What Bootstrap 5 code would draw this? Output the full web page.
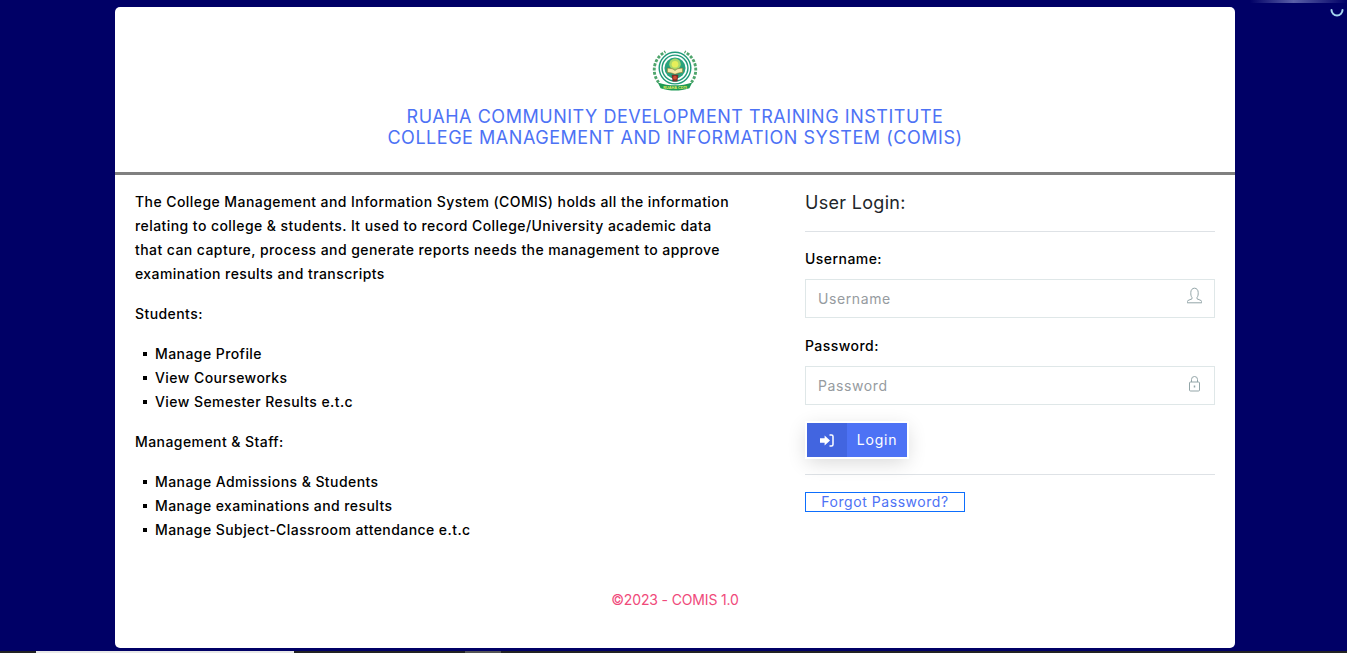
<!DOCTYPE html>
<html lang="en">
<head>
<meta charset="utf-8">
<title>COMIS Login</title>
<link href="https://cdn.jsdelivr.net/npm/bootstrap@5.3.0/dist/css/bootstrap.min.css" rel="stylesheet">
<style>
html,body{height:653px;overflow:hidden}
body{background:#000066;font-family:"Inter","Noto Sans",sans-serif;font-size:14px;color:#000;line-height:24px;position:relative}
.sheet{width:1120px;height:641px;margin:7px 0 0 115px;background:#fff;border-radius:5px;overflow:hidden}
.head-block{height:165px;border-bottom:3px solid #808080;box-sizing:content-box;text-align:center;display:flex;flex-direction:column;align-items:center}
.crest{margin-top:40px;width:46px;height:46px;display:block}
.inst{margin:13px 0 0;font-size:18px;line-height:21px;color:#4d72f5;font-weight:400;letter-spacing:.53px}
.body-row{display:flex}
.intro{width:671px;padding:15px 51px 0 20px;font-weight:450;letter-spacing:.43px}
.intro p{margin:0 0 16px}
.intro ul{list-style:none;margin:0 0 16px;padding:0 0 0 20px}
.intro li{position:relative}
.intro li::before{content:"";position:absolute;left:-12px;top:10px;width:4px;height:4px;background:#000}
.login{width:410px;margin-left:19px}
.login h5{font-size:18px;font-weight:400;line-height:22px;margin:17px 0 17px;color:#212529;letter-spacing:.3px}
.login hr{margin:0;border-top:1px solid #dee2e6;opacity:1}
.flabel{display:block;font-weight:450;line-height:17px;margin:18px 0 12px;letter-spacing:.45px}
.fieldbox{position:relative}
.fieldbox .form-control{height:39px;border:1px solid #dfe7e8;border-radius:0;padding:0 12px;font-size:14px;font-family:inherit;letter-spacing:.6px}
.fieldbox .form-control::placeholder{color:#969ba0}
.fieldbox svg{position:absolute;right:13px;top:9px;width:15px;height:17px}
.fieldbox svg.usr{top:8px}
.pw-label{margin-top:19px}
.btn-login{display:inline-flex;margin:18px 0 17px 2px;height:34px;padding:0;border:0;border-radius:0;background:#4d72f5;color:#fff;font-size:14px;line-height:34px;box-shadow:0 0 0 2px #fff,0 5px 20px rgba(0,0,0,.16);width:100px;letter-spacing:.8px}
.btn-login:hover{background:#4d72f5;color:#fff}
.btn-ico{width:40px;background:#4265e0;display:flex;align-items:center;justify-content:center}
.btn-txt{flex:1;text-align:center}
.forgot{display:block;width:160px;height:20px;line-height:18px;border:1px solid #0d6efd;text-align:center;color:#4d72f5;text-decoration:none;margin-top:17px;letter-spacing:.55px}
.copy{text-align:center;color:#f0497a;position:absolute;left:115px;width:1120px;top:588px;letter-spacing:-.15px}
.spinner-mark{position:absolute;left:1330px;top:3px;width:14px;height:14px}
.top-glow{position:absolute;left:1250px;top:0;width:97px;height:3px;background:linear-gradient(90deg,#000066,#5a5fa8 45%,#000066)}
.taskstrip{position:absolute;left:0;right:0;top:651px;height:2px;background:#222}
.taskstrip i{position:absolute;left:36px;width:258px;height:2px;background:#e8e8e8}
.taskstrip b{position:absolute;left:465px;width:36px;height:2px;background:#555}
</style>
</head>
<body>
<div class="sheet">
  <div class="head-block">
    <svg class="crest" viewBox="0 0 48 48" aria-hidden="true">
      <g fill="none" stroke="#4fa56c" stroke-linecap="butt">
        <path d="M7 37A21 21 0 0 1 14 5" stroke-width="3" stroke-dasharray="3 1.500"/>
        <path d="M41 37A21 21 0 0 0 34 5" stroke-width="3" stroke-dasharray="3 1.500"/>
      </g>
      <circle cx="24" cy="22" r="16.500" fill="#fff" stroke="#1f9a78" stroke-width="1.500"/>
      <circle cx="24" cy="22" r="13.500" fill="#fff" stroke="#1f9a78" stroke-width="1.500"/>
      <circle cx="24" cy="22" r="11" fill="#2aa27e"/>
      <circle cx="24" cy="18" r="6" fill="#a9d86a"/>
      <circle cx="24" cy="18" r="3.500" fill="#e6ee5a"/>
      <path d="M16 22c4 0 7 1 8 2.500 1-1.500 4-2.500 8-2.500v4.500c-3 0-6 1-8 2-2-1-5-2-8-2z" fill="#f4eaa8" stroke="#7b6a1e" stroke-width=".6"/>
      <path d="M20.500 29h7l-1 7h-5z" fill="#7a2d2a"/>
      <circle cx="24" cy="32" r="2" fill="#d04a30"/>
      <path d="M6 37c6 2 12 3 18 3s12-1 18-3l-3 6c-5 1.500-10 2.500-15 2.500s-10-1-15-2.500z" fill="#1f9a55"/>
      <text x="24" y="43.500" text-anchor="middle" font-size="4" font-weight="700" fill="#e8ec60" font-family="Liberation Sans, sans-serif">RUAHA CDTI</text>
    </svg>
    <h1 class="inst">RUAHA COMMUNITY DEVELOPMENT TRAINING INSTITUTE<br>COLLEGE MANAGEMENT AND INFORMATION SYSTEM (COMIS)</h1>
  </div>
  <div class="body-row">
    <div class="intro">
      <p>The College Management and Information System (COMIS) holds all the information relating to college &amp; students. It used to record College/University academic data that can capture, process and generate reports needs the management to approve examination results and transcripts</p>
      <p>Students:</p>
      <ul>
        <li>Manage Profile</li>
        <li>View Courseworks</li>
        <li>View Semester Results e.t.c</li>
      </ul>
      <p>Management &amp; Staff:</p>
      <ul>
        <li>Manage Admissions &amp; Students</li>
        <li>Manage examinations and results</li>
        <li>Manage Subject-Classroom attendance e.t.c</li>
      </ul>
    </div>
    <form class="login">
      <h5>User Login:</h5>
      <hr>
      <label class="flabel" for="u">Username:</label>
      <div class="fieldbox">
        <input id="u" class="form-control" type="text" placeholder="Username">
        <svg class="usr" viewBox="0 0 15 17" fill="none" stroke="#93a5a8" stroke-width="1"><path d="M5 10.500C3.800 9 3.800 7.500 3.800 5.500 3.800 3 5.300 1.200 7.500 1.200s3.700 1.800 3.700 4.300c0 2 0 3.500-1.200 5v1.300l4 1.700c.6.300.8.800.8 2.300H.2c0-1.500.2-2 .8-2.300l4-1.700z"/></svg>
      </div>
      <label class="flabel pw-label" for="p">Password:</label>
      <div class="fieldbox">
        <input id="p" class="form-control" type="password" placeholder="Password">
        <svg viewBox="0 0 15 17" fill="none" stroke="#93a5a8" stroke-width="1"><rect x="2.500" y="7" width="10" height="9" rx="1"/><path d="M4.500 7V4.500a3 3 0 0 1 6 0V7"/><path d="M7.500 10.500v2" stroke-width="1.500"/></svg>
      </div>
      <button type="button" class="btn btn-login"><span class="btn-ico"><svg width="14" height="13" viewBox="0 0 14 13"><path d="M0 4.300h4.600V1.500L10 6.500l-5.400 5V8.700H0z" fill="#fff"/><path d="M9.500 1h2c1 0 1.500.5 1.500 1.500v8c0 1-.5 1.500-1.500 1.500h-2" fill="none" stroke="#fff" stroke-width="1.500"/></svg></span><span class="btn-txt">Login</span></button>
      <hr>
      <a class="forgot" href="#">Forgot Password?</a>
    </form>
  </div>
</div>
<div class="copy">©2023 - COMIS 1.0</div>
<svg class="spinner-mark" viewBox="0 0 14 14" aria-hidden="true"><path d="M1.500 7a5.500 5.500 0 0 0 11 0" fill="none" stroke="#a5d4ee" stroke-width="2" stroke-linecap="round"/></svg>
<div class="top-glow"></div>
<div class="taskstrip"><i></i><b></b></div>
</body>
</html>
